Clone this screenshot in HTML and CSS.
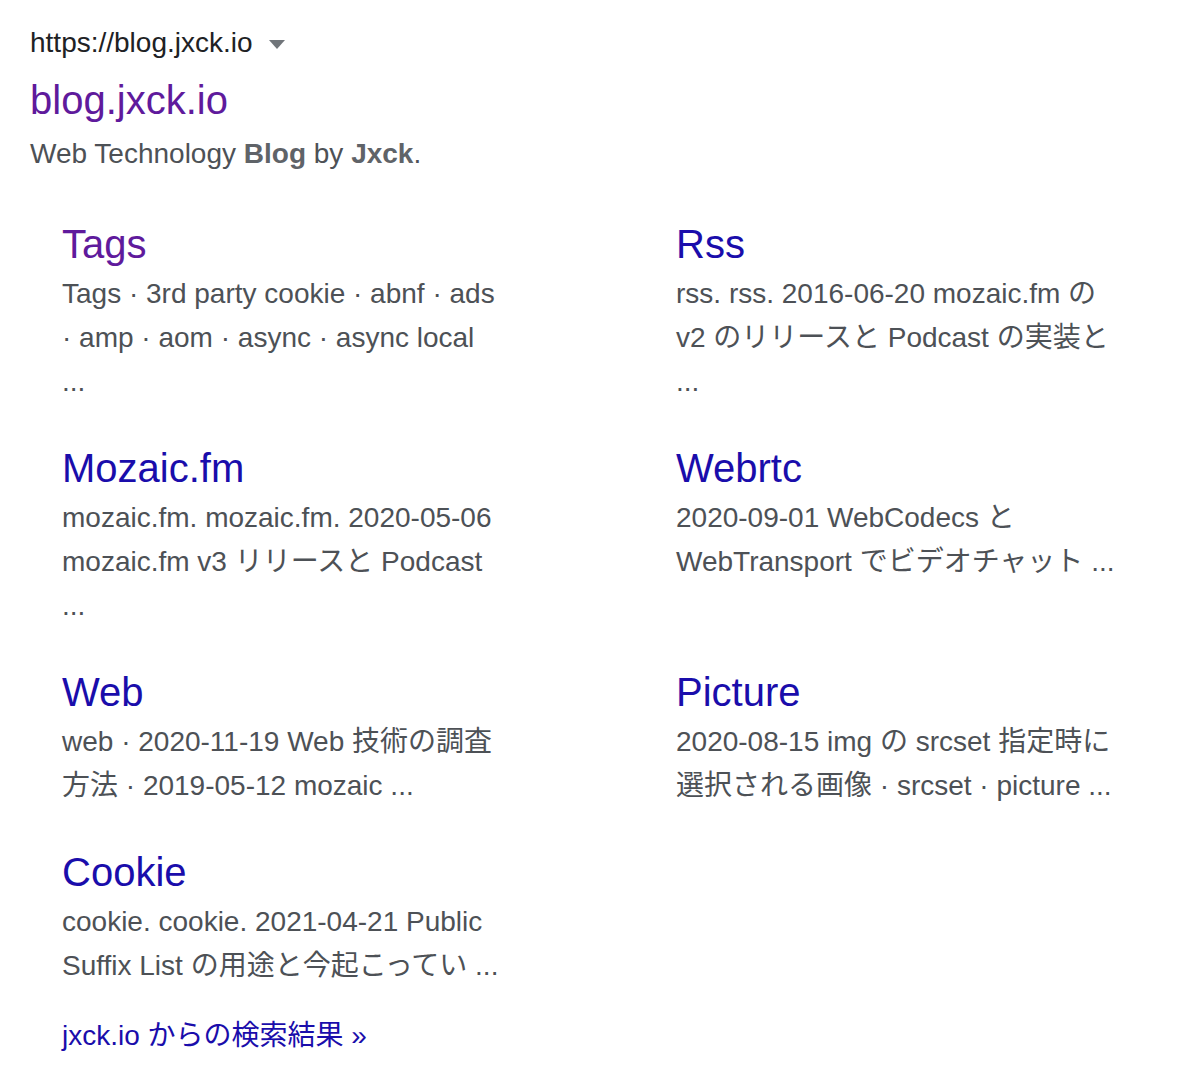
FILE: index.html
```html
<!DOCTYPE html>
<html lang="ja">
<head>
<meta charset="utf-8">
<title>blog.jxck.io</title>
<link rel="stylesheet" href="styles.css">
</head>
<body>
<div class="result">
  <div class="url-line">
    <cite class="url">https://blog.jxck.io</cite>
    <span class="caret" aria-hidden="true"></span>
  </div>
  <a class="title visited" href="#">blog.jxck.io</a>
  <div class="snippet">Web Technology <b>Blog</b> by <b>Jxck</b>.</div>

  <div class="sitelinks">
    <div class="sitelink">
      <a class="sl-title visited" href="#">Tags</a>
      <div class="sl-snippet">Tags · 3rd party cookie · abnf · ads · amp · aom · async · async local ...</div>
    </div>
    <div class="sitelink">
      <a class="sl-title" href="#">Rss</a>
      <div class="sl-snippet">rss. rss. 2016-06-20 mozaic.fm の v2 のリリースと Podcast の実装と ...</div>
    </div>
    <div class="sitelink">
      <a class="sl-title" href="#">Mozaic.fm</a>
      <div class="sl-snippet">mozaic.fm. mozaic.fm. 2020-05-06 mozaic.fm v3 リリースと Podcast ...</div>
    </div>
    <div class="sitelink">
      <a class="sl-title" href="#">Webrtc</a>
      <div class="sl-snippet">2020-09-01 WebCodecs と WebTransport でビデオチャット ...</div>
    </div>
    <div class="sitelink">
      <a class="sl-title" href="#">Web</a>
      <div class="sl-snippet">web · 2020-11-19 Web 技術の調査方法 · 2019-05-12 mozaic ...</div>
    </div>
    <div class="sitelink">
      <a class="sl-title" href="#">Picture</a>
      <div class="sl-snippet">2020-08-15 img の srcset 指定時に選択される画像 · srcset · picture ...</div>
    </div>
    <div class="sitelink">
      <a class="sl-title" href="#">Cookie</a>
      <div class="sl-snippet">cookie. cookie. 2021-04-21 Public Suffix List の用途と今起こってい ...</div>
    </div>
  </div>

  <a class="more" href="#">jxck.io からの検索結果 »</a>
</div>
</body>
</html>
```

FILE: styles.css
```css
html, body {
  margin: 0;
  padding: 0;
  background: #ffffff;
}

body {
  font-family: "Liberation Sans", Arial, "Noto Sans CJK JP", sans-serif;
  -webkit-font-smoothing: antialiased;
}

.result {
  padding: 23px 0 0 30px;
}

a {
  text-decoration: none;
}

.url-line {
  display: flex;
  align-items: center;
  height: 40px;
}

.url {
  font-style: normal;
  font-size: 28px;
  line-height: 40px;
  color: #202124;
}

.caret {
  width: 0;
  height: 0;
  margin-left: 16px;
  margin-top: 2px;
  border-left: 8px solid transparent;
  border-right: 8px solid transparent;
  border-top: 9px solid #70757a;
}

.title {
  display: block;
  margin-top: 11px;
  font-size: 40px;
  line-height: 52px;
  color: #1a0dab;
}

.title.visited,
.sl-title.visited {
  color: #5f1a9c;
}

.snippet {
  margin-top: 6px;
  font-size: 28px;
  line-height: 44px;
  color: #4d5156;
}

.snippet b {
  color: #5f6368;
  font-weight: bold;
}

.sitelinks {
  display: grid;
  grid-template-columns: 614px 440px;
  row-gap: 38px;
  margin-top: 42px;
  padding-left: 32px;
}

.sitelink {
  width: 440px;
}

.sl-title {
  display: block;
  font-size: 40px;
  line-height: 52px;
  color: #1a0dab;
}

.sl-snippet {
  margin-top: 2px;
  font-size: 28px;
  line-height: 44px;
  color: #4d5156;
}

.more {
  display: block;
  margin-top: 26px;
  margin-left: 32px;
  font-size: 28px;
  line-height: 44px;
  color: #1a0dab;
}
```
